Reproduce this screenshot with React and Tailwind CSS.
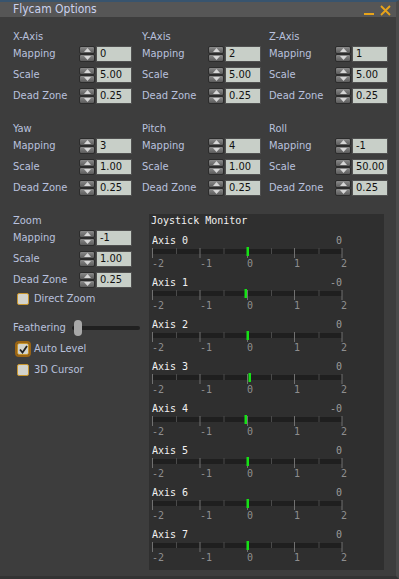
import React from "react";

const SANS = { fontFamily: '"DejaVu Sans Condensed", "DejaVu Sans", sans-serif', fontStretch: "condensed" };
const MONO = { fontFamily: '"DejaVu Sans Mono", "Liberation Mono", monospace' };

function Spinner({ value }) {
  return (
    <div className="flex items-center">
      <div className="flex flex-col w-[16px] h-[16px]">
        <div className="h-[8px] rounded-[2px] bg-linear-to-b from-[#8a8a8a] to-[#5c5c5c] border border-[#2c2c2c] flex items-center justify-center">
          <svg width="7" height="4" viewBox="0 0 7 4"><path d="M0 4 L3.5 0 L7 4Z" fill="#d6d6d6" /></svg>
        </div>
        <div className="h-[8px] rounded-[2px] bg-linear-to-b from-[#8a8a8a] to-[#5c5c5c] border border-[#2c2c2c] flex items-center justify-center">
          <svg width="7" height="4" viewBox="0 0 7 4"><path d="M0 0 L3.5 4 L7 0Z" fill="#d6d6d6" /></svg>
        </div>
      </div>
      <div className="ml-px w-[36px] h-[16px] bg-[#c8cfc8] border border-[#505050] text-[#111] pl-[3px] text-[11px] leading-[14px]">
        {value}
      </div>
    </div>
  );
}

function Row({ label, value }) {
  return (
    <div className="flex items-center h-[16px]">
      <div className="w-[66px] text-[11px] text-[#b9c1de]">{label}</div>
      <Spinner value={value} />
    </div>
  );
}

function AxisGroup({ title, m, s, d }) {
  return (
    <div className="flex flex-col">
      <div className="h-[14px] leading-[14px] text-[11px] text-[#b9c1de]">{title}</div>
      <div className="mt-[2px] flex flex-col gap-[5px]">
        <Row label="Mapping" value={m} />
        <Row label="Scale" value={s} />
        <Row label="Dead Zone" value={d} />
      </div>
    </div>
  );
}

function Checkbox({ checked, focused, label }) {
  return (
    <div className="flex items-center h-[16px]">
      <div className={"ml-[4px] w-[12px] h-[12px] rounded-[2px] bg-[#d3d3cc] border border-[#c8962e] flex items-center justify-center " + (focused ? "outline-2 outline-[#9a6414]" : "")}>
        {checked && (
          <svg width="9" height="9" viewBox="0 0 9 9"><path d="M1 4.5 L3.5 7.5 L8 1" stroke="#222" strokeWidth="1.8" fill="none" /></svg>
        )}
      </div>
      <div className="ml-[5px] text-[11px] text-[#b9c1de]">{label}</div>
    </div>
  );
}

const axes = [
  { v: "0", o: 0 },
  { v: "-0", o: -2 },
  { v: "0", o: 0 },
  { v: "0", o: 2 },
  { v: "-0", o: -2 },
  { v: "0", o: 0 },
  { v: "0", o: 0 },
  { v: "0", o: 0 },
];

function AxisBar({ name, value, off }) {
  const major = [0.5, 48, 95.5, 142.5, 190];
  const minor = [24, 71.5, 119, 166.5];
  return (
    <div className="mt-[5px] flex flex-col">
      <div className="w-[190px] h-[14px] flex justify-between items-center text-[10px]">
        <span className="text-[#f2f2f2]">{name}</span>
        <span className="text-[#9c9c9c]">{value}</span>
      </div>
      <svg width="193" height="11" viewBox="0 0 193 11" className="block">
        <rect x="0" y="2" width="190" height="5" fill="#1f1f1f" />
        {minor.map((x) => (
          <rect key={"m" + x} x={x} y="1" width="1" height="6" fill="#4a4a4a" />
        ))}
        {major.map((x) => (
          <rect key={"M" + x} x={x - 0.5} y="1" width="1" height="10" fill="#707070" />
        ))}
        <rect x={94.5 + off} y="0" width="2.5" height="9" fill="#16e016" />
      </svg>
      <div className="grid grid-cols-[48px_47px_47px_47px_auto] h-[12px] leading-[12px] text-[10px] text-[#8e8e8e]">
        <span>-2</span>
        <span>-1</span>
        <span>0</span>
        <span>1</span>
        <span>2</span>
      </div>
    </div>
  );
}

export default function App() {
  return (
    <div className="w-[399px] h-[579px] bg-[#3d3d3d] flex flex-col border-t-2 border-t-[#38546e] border-r-[3px] border-r-[#4a4a4a] border-b-[3px] border-b-[#333]" style={SANS}>
      <div className="h-[15px] bg-[#565656] flex items-center justify-between pl-[13px] pr-[5px]">
        <span className="text-[12px] leading-[15px] text-[#cad2ef]">Flycam Options</span>
        <div className="flex items-end gap-[6px] h-[12px]">
          <div className="w-[10px] h-[2px] bg-[#e8a41a] mb-[1px]" />
          <svg width="11" height="11" viewBox="0 0 11 11">
            <path d="M1 1 L10 10 M10 1 L1 10" stroke="#e8a41a" strokeWidth="1.8" />
          </svg>
        </div>
      </div>
      <div className="pl-[13px] pt-[13px] flex flex-col">
        <div className="grid grid-cols-[129px_127px_1fr]">
          <AxisGroup title="X-Axis" m="0" s="5.00" d="0.25" />
          <AxisGroup title="Y-Axis" m="2" s="5.00" d="0.25" />
          <AxisGroup title="Z-Axis" m="1" s="5.00" d="0.25" />
        </div>
        <div className="mt-[18px] grid grid-cols-[129px_127px_1fr]">
          <AxisGroup title="Yaw" m="3" s="1.00" d="0.25" />
          <AxisGroup title="Pitch" m="4" s="1.00" d="0.25" />
          <AxisGroup title="Roll" m="-1" s="50.00" d="0.25" />
        </div>
        <div className="mt-[18px] flex">
          <div className="w-[136px] flex flex-col">
            <AxisGroup title="Zoom" m="-1" s="1.00" d="0.25" />
            <div className="mt-[3px]">
              <Checkbox label="Direct Zoom" />
            </div>
            <div className="mt-[13px] flex items-center h-[16px]">
              <div className="w-[59px] text-[11px] text-[#b9c1de]">Feathering</div>
              <div className="relative w-[68px] h-[16px] flex items-center">
                <div className="w-full h-[4px] rounded-full bg-[#202020]" />
                <div className="absolute left-[2px] top-0 w-[8px] h-[16px] rounded-[4px] bg-[#a8a8a8]" />
              </div>
            </div>
            <div className="mt-[5px]">
              <Checkbox label="Auto Level" checked focused />
            </div>
            <div className="mt-[5px]">
              <Checkbox label="3D Cursor" />
            </div>
          </div>
          <div className="w-[235px] h-[356px] bg-[#2f2f2f] pl-[3px] flex flex-col" style={MONO}>
            <div className="h-[14px] leading-[14px] text-[10px] text-[#f2f2f2] -ml-px">Joystick Monitor</div>
            {axes.map((a, i) => (
              <AxisBar key={i} name={"Axis " + i} value={a.v} off={a.o} />
            ))}
          </div>
        </div>
      </div>
    </div>
  );
}
